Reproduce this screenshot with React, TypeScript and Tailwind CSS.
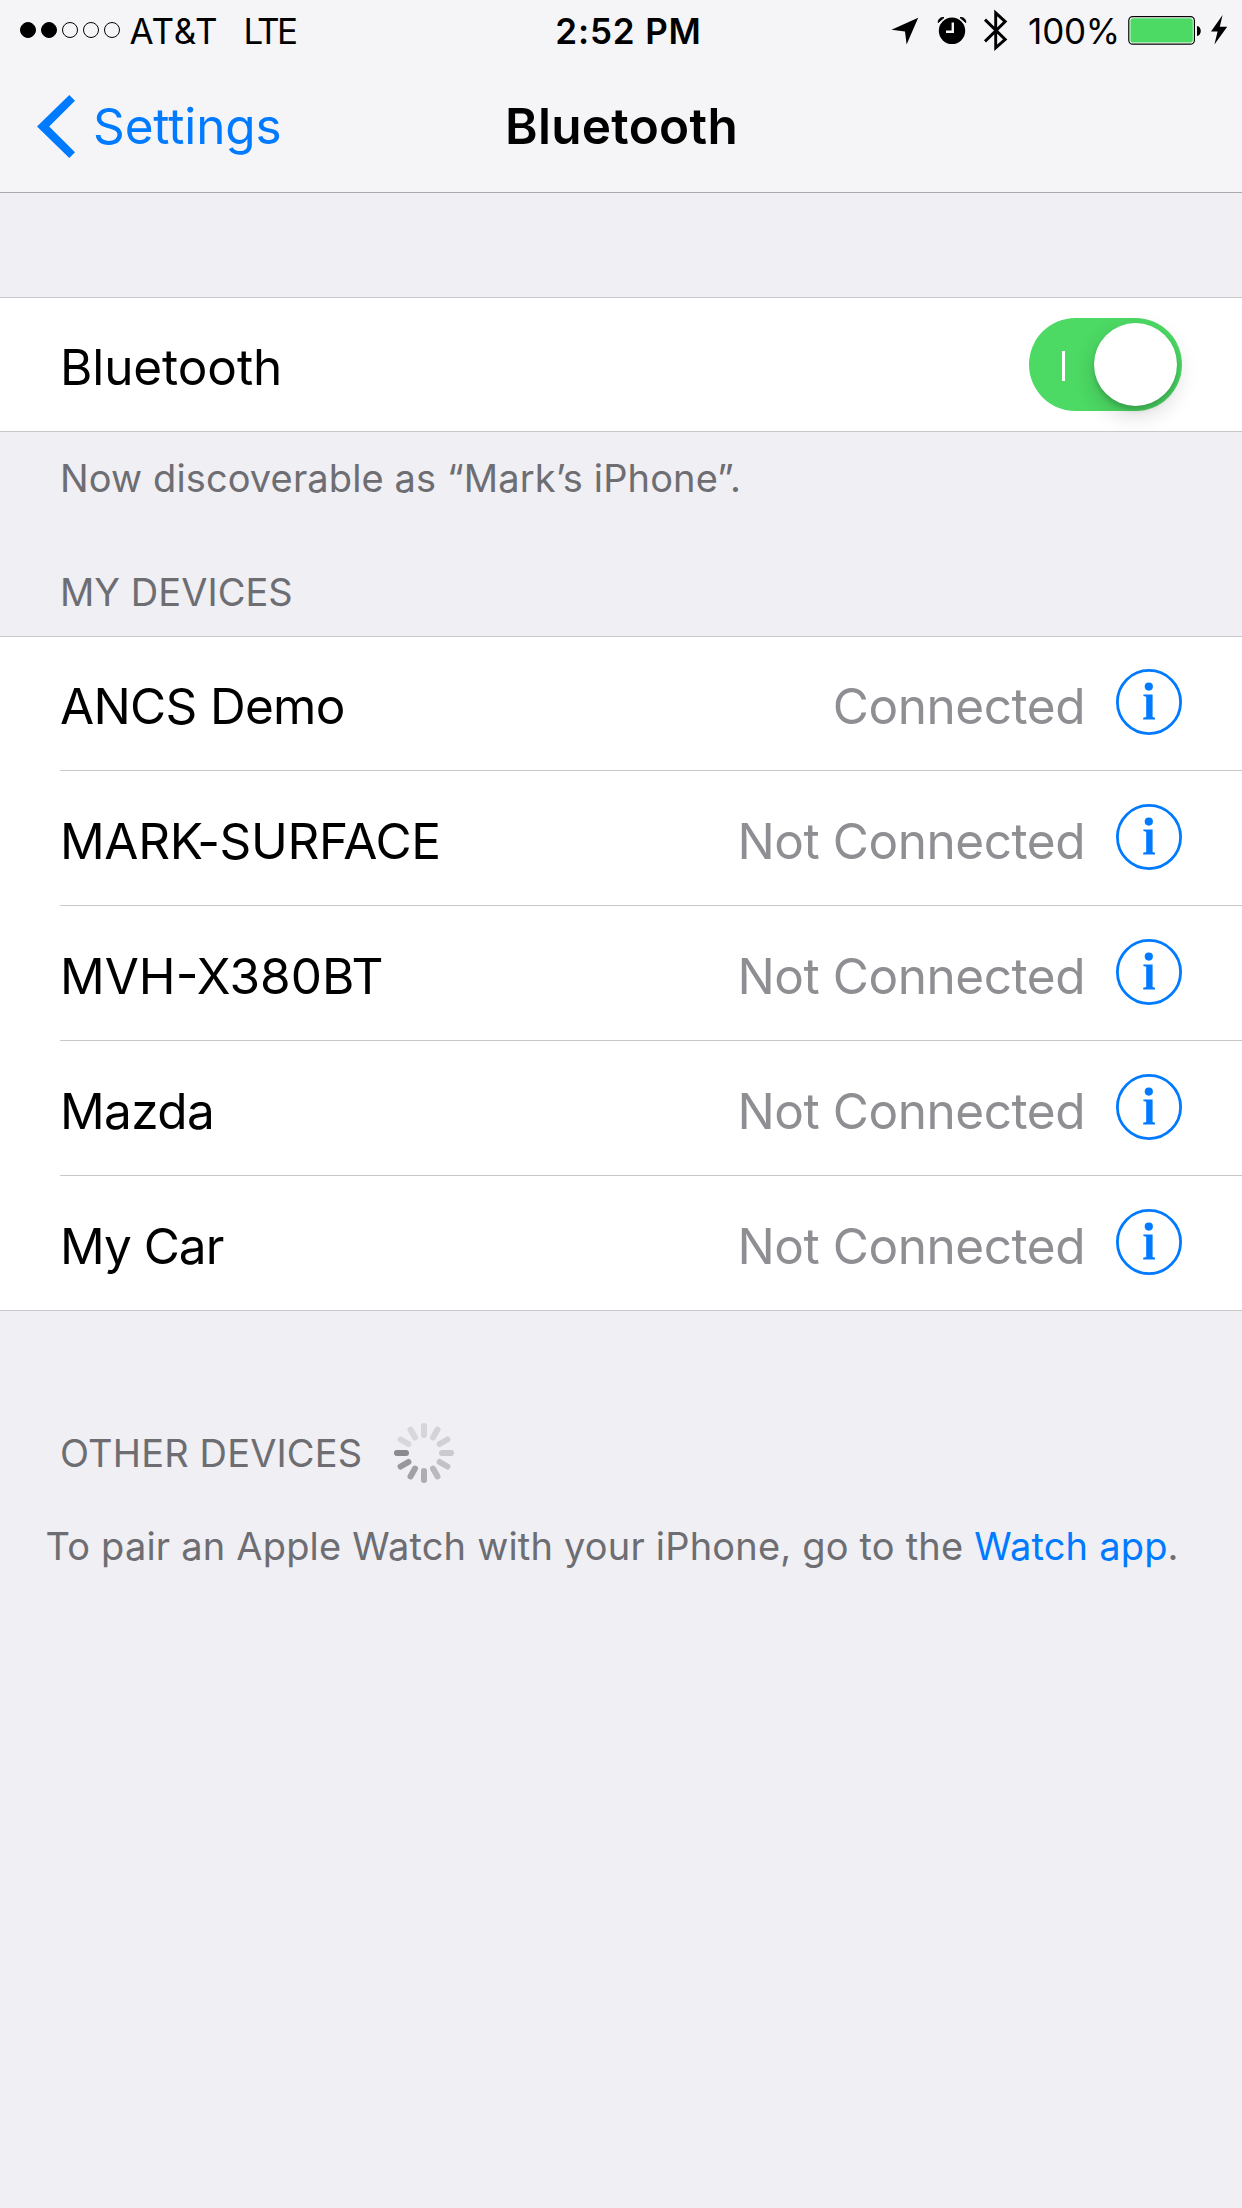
type Device = { name: string; status: string; tracking: string };

const devices: Device[] = [
  { name: "ANCS Demo", status: "Connected", tracking: "tracking-[-0.68px]" },
  { name: "MARK-SURFACE", status: "Not Connected", tracking: "tracking-[-0.36px]" },
  { name: "MVH-X380BT", status: "Not Connected", tracking: "tracking-[0px]" },
  { name: "Mazda", status: "Not Connected", tracking: "tracking-[-0.6px]" },
  { name: "My Car", status: "Not Connected", tracking: "tracking-[-1px]" },
];

function SignalDots() {
  return (
    <div className="mt-[22px] flex gap-[5px]">
      {[true, true, false, false, false].map((on, i) => (
        <span
          key={i}
          className={on ? "size-4 rounded-full border border-black bg-black" : "size-4 rounded-full border border-black"}
        />
      ))}
    </div>
  );
}

function StatusIcons() {
  return (
    <svg className="block h-[60px] w-[124px]" viewBox="890 0 124 60">
      {/* location arrow */}
      <path d="M918.2 17.8 L906.6 44.6 L905 31.6 L891.5 29.8 Z" fill="#000" />
      {/* alarm clock */}
      <circle cx="952" cy="30.8" r="13.2" fill="#000" />
      <path d="M938.2 22.6 C938 19.4 940.6 17 944 17.6 Z" fill="#000" stroke="#000" strokeWidth="1" />
      <path d="M965.8 22.6 C966 19.4 963.4 17 960 17.6 Z" fill="#000" stroke="#000" strokeWidth="1" />
      <path d="M952.8 22.4 V31.8 H946" fill="none" stroke="#f5f5f8" strokeWidth="2.4" />
      {/* bluetooth rune */}
      <path
        d="M985 19.6 L1005.2 39.4 L995.7 47.8 V12.9 L1005.2 21.6 L985 41.4"
        fill="none"
        stroke="#000"
        strokeWidth="2.9"
        strokeMiterlimit="10"
      />
    </svg>
  );
}

function Battery() {
  return (
    <svg className="block h-[60px] w-[102px]" viewBox="1127 0 102 60">
      <rect x="1128.8" y="16.6" width="65.6" height="27.6" rx="4" fill="#fff" stroke="#000" strokeWidth="1.2" />
      <rect x="1130.4" y="18.2" width="62.4" height="24.4" rx="2.6" fill="#4cd964" />
      <path d="M1197 26 C1202 26.6 1202 35.4 1197 36 Z" fill="#000" />
      <path d="M1222.6 15 L1211 31.4 H1217.6 L1214.4 44.4 L1227.2 26.8 H1219.8 Z" fill="#000" />
    </svg>
  );
}

function InfoIcon() {
  return (
    <svg className="mb-[35px] ml-[31px] block size-[66px]" viewBox="0 0 66 66">
      <circle cx="33" cy="33" r="31.6" fill="none" stroke="#007aff" strokeWidth="2.8" />
      <circle cx="32.8" cy="17.6" r="4.1" fill="#007aff" />
      <path d="M27.4 25.4 H36.6 V48 L39 48.8 V50.5 H27.2 V48.8 L30.2 48 V27.8 L27.4 27 Z" fill="#007aff" />
    </svg>
  );
}

const spokes = [
  "#d5d5da", "#d3d3d8", "#d0d0d5", "#cacacf", "#c2c2c7", "#b9b9be",
  "#adadb2", "#a1a1a6", "#97979c", "#8a8a8f", "#d7d7dc", "#d7d7dc",
];

function Spinner() {
  return (
    <svg className="block size-[60px]" viewBox="-30 -30 60 60">
      {spokes.map((color, i) => (
        <rect key={i} x="-3" y="-30" width="6" height="15" rx="3" fill={color} transform={`rotate(${i * 30})`} />
      ))}
    </svg>
  );
}

function Toggle() {
  return (
    <div className="mt-5 flex h-[93px] w-[153px] items-center rounded-full bg-[#4cd964] pr-[5px] pl-[33px]">
      <span className="mt-[3px] h-[30px] w-[3px] bg-white" />
      <span className="ml-auto size-[83px] rounded-full bg-white shadow-[0_9px_22px_rgba(0,0,0,0.16),0_4px_5px_rgba(0,0,0,0.15)]" />
    </div>
  );
}

export default function App() {
  return (
    <div className="min-h-[2208px] w-[1242px] overflow-hidden bg-[#efeff4] font-['Inter','Liberation_Sans',sans-serif] text-black">
      <header className="h-[193px] border-b border-[#a9a9ad] bg-[#f5f5f8]">
        <div className="grid h-[60px] grid-cols-3 text-[35px] leading-[40px]">
          <div className="flex pl-5">
            <SignalDots />
            <span className="mt-[11px] ml-[9.5px] tracking-[0.8px]">AT&amp;T</span>
            <span className="mt-[11px] ml-[25px] tracking-[-2.76px]">LTE</span>
          </div>
          <div className="mt-[11px] pl-[15px] text-center font-semibold tracking-[0.85px]">2:52 PM</div>
          <div className="flex justify-end pr-[13px]">
            <StatusIcons />
            <span className="mt-[11px] mr-[7px] ml-[14px] tracking-[-0.22px]">100%</span>
            <Battery />
          </div>
        </div>
        <div className="grid h-[132px] grid-cols-3 text-[49.5px] leading-[60px]">
          <div className="flex pl-[37px] text-[#007aff]">
            <svg className="mt-[35px] block h-[63px] w-[38px]" viewBox="0 0 38 63">
              <path d="M32.3 0 L38 5.7 L12.2 31.5 L38 57.3 L32.3 63 L0 31.5 Z" fill="#007aff" />
            </svg>
            <span className="mt-9 ml-[18px] tracking-[-0.13px]">Settings</span>
          </div>
          <h1 className="mt-9 pl-px text-center font-semibold tracking-[0.3px]">Bluetooth</h1>
        </div>
      </header>

      <section className="mt-[104px] flex h-[135px] justify-between border-y border-[#c8c7cc] bg-white pr-[60px] pl-[60px]">
        <span className="mt-[39px] text-[49.5px] leading-[60px] tracking-[-0.1px]">Bluetooth</span>
        <Toggle />
      </section>
      <p className="mt-[21px] pl-[60px] text-[38px] leading-[50px] tracking-[0.12px] text-[#6d6d72]">
        Now discoverable as “Mark’s iPhone”.
      </p>

      <h2 className="mt-16 pl-[60px] text-[38px] leading-[50px] tracking-[0.02px] text-[#6d6d72]">MY DEVICES</h2>
      <ul className="mt-[19px] h-[675px] border-y border-[#c8c7cc] bg-white pl-[60px] text-[49.5px] leading-[60px]">
        {devices.map((d, i) => (
          <li
            key={d.name}
            className={
              i === 0
                ? "flex h-[133px] items-end pr-[60px]"
                : "flex h-[135px] items-end border-t border-[#c8c7cc] pr-[60px]"
            }
          >
            <span className={`mb-[34px] flex-1 ${d.tracking}`}>{d.name}</span>
            <span className="mb-[34px] tracking-[-0.46px] text-[#8e8e93]">{d.status}</span>
            <InfoIcon />
          </li>
        ))}
      </ul>

      <div className="mt-[112px] flex items-center pl-[60px]">
        <h2 className="text-[38px] leading-[60px] tracking-[0.15px] text-[#6d6d72]">OTHER DEVICES</h2>
        <div className="ml-[32px]">
          <Spinner />
        </div>
      </div>
      <p className="mt-[38px] pl-[45.5px] text-[38px] leading-[50px] tracking-[0.19px] whitespace-nowrap text-[#6d6d72]">
        To pair an Apple Watch with your iPhone, go to the <a className="text-[#007aff]">Watch app</a>.
      </p>
    </div>
  );
}
